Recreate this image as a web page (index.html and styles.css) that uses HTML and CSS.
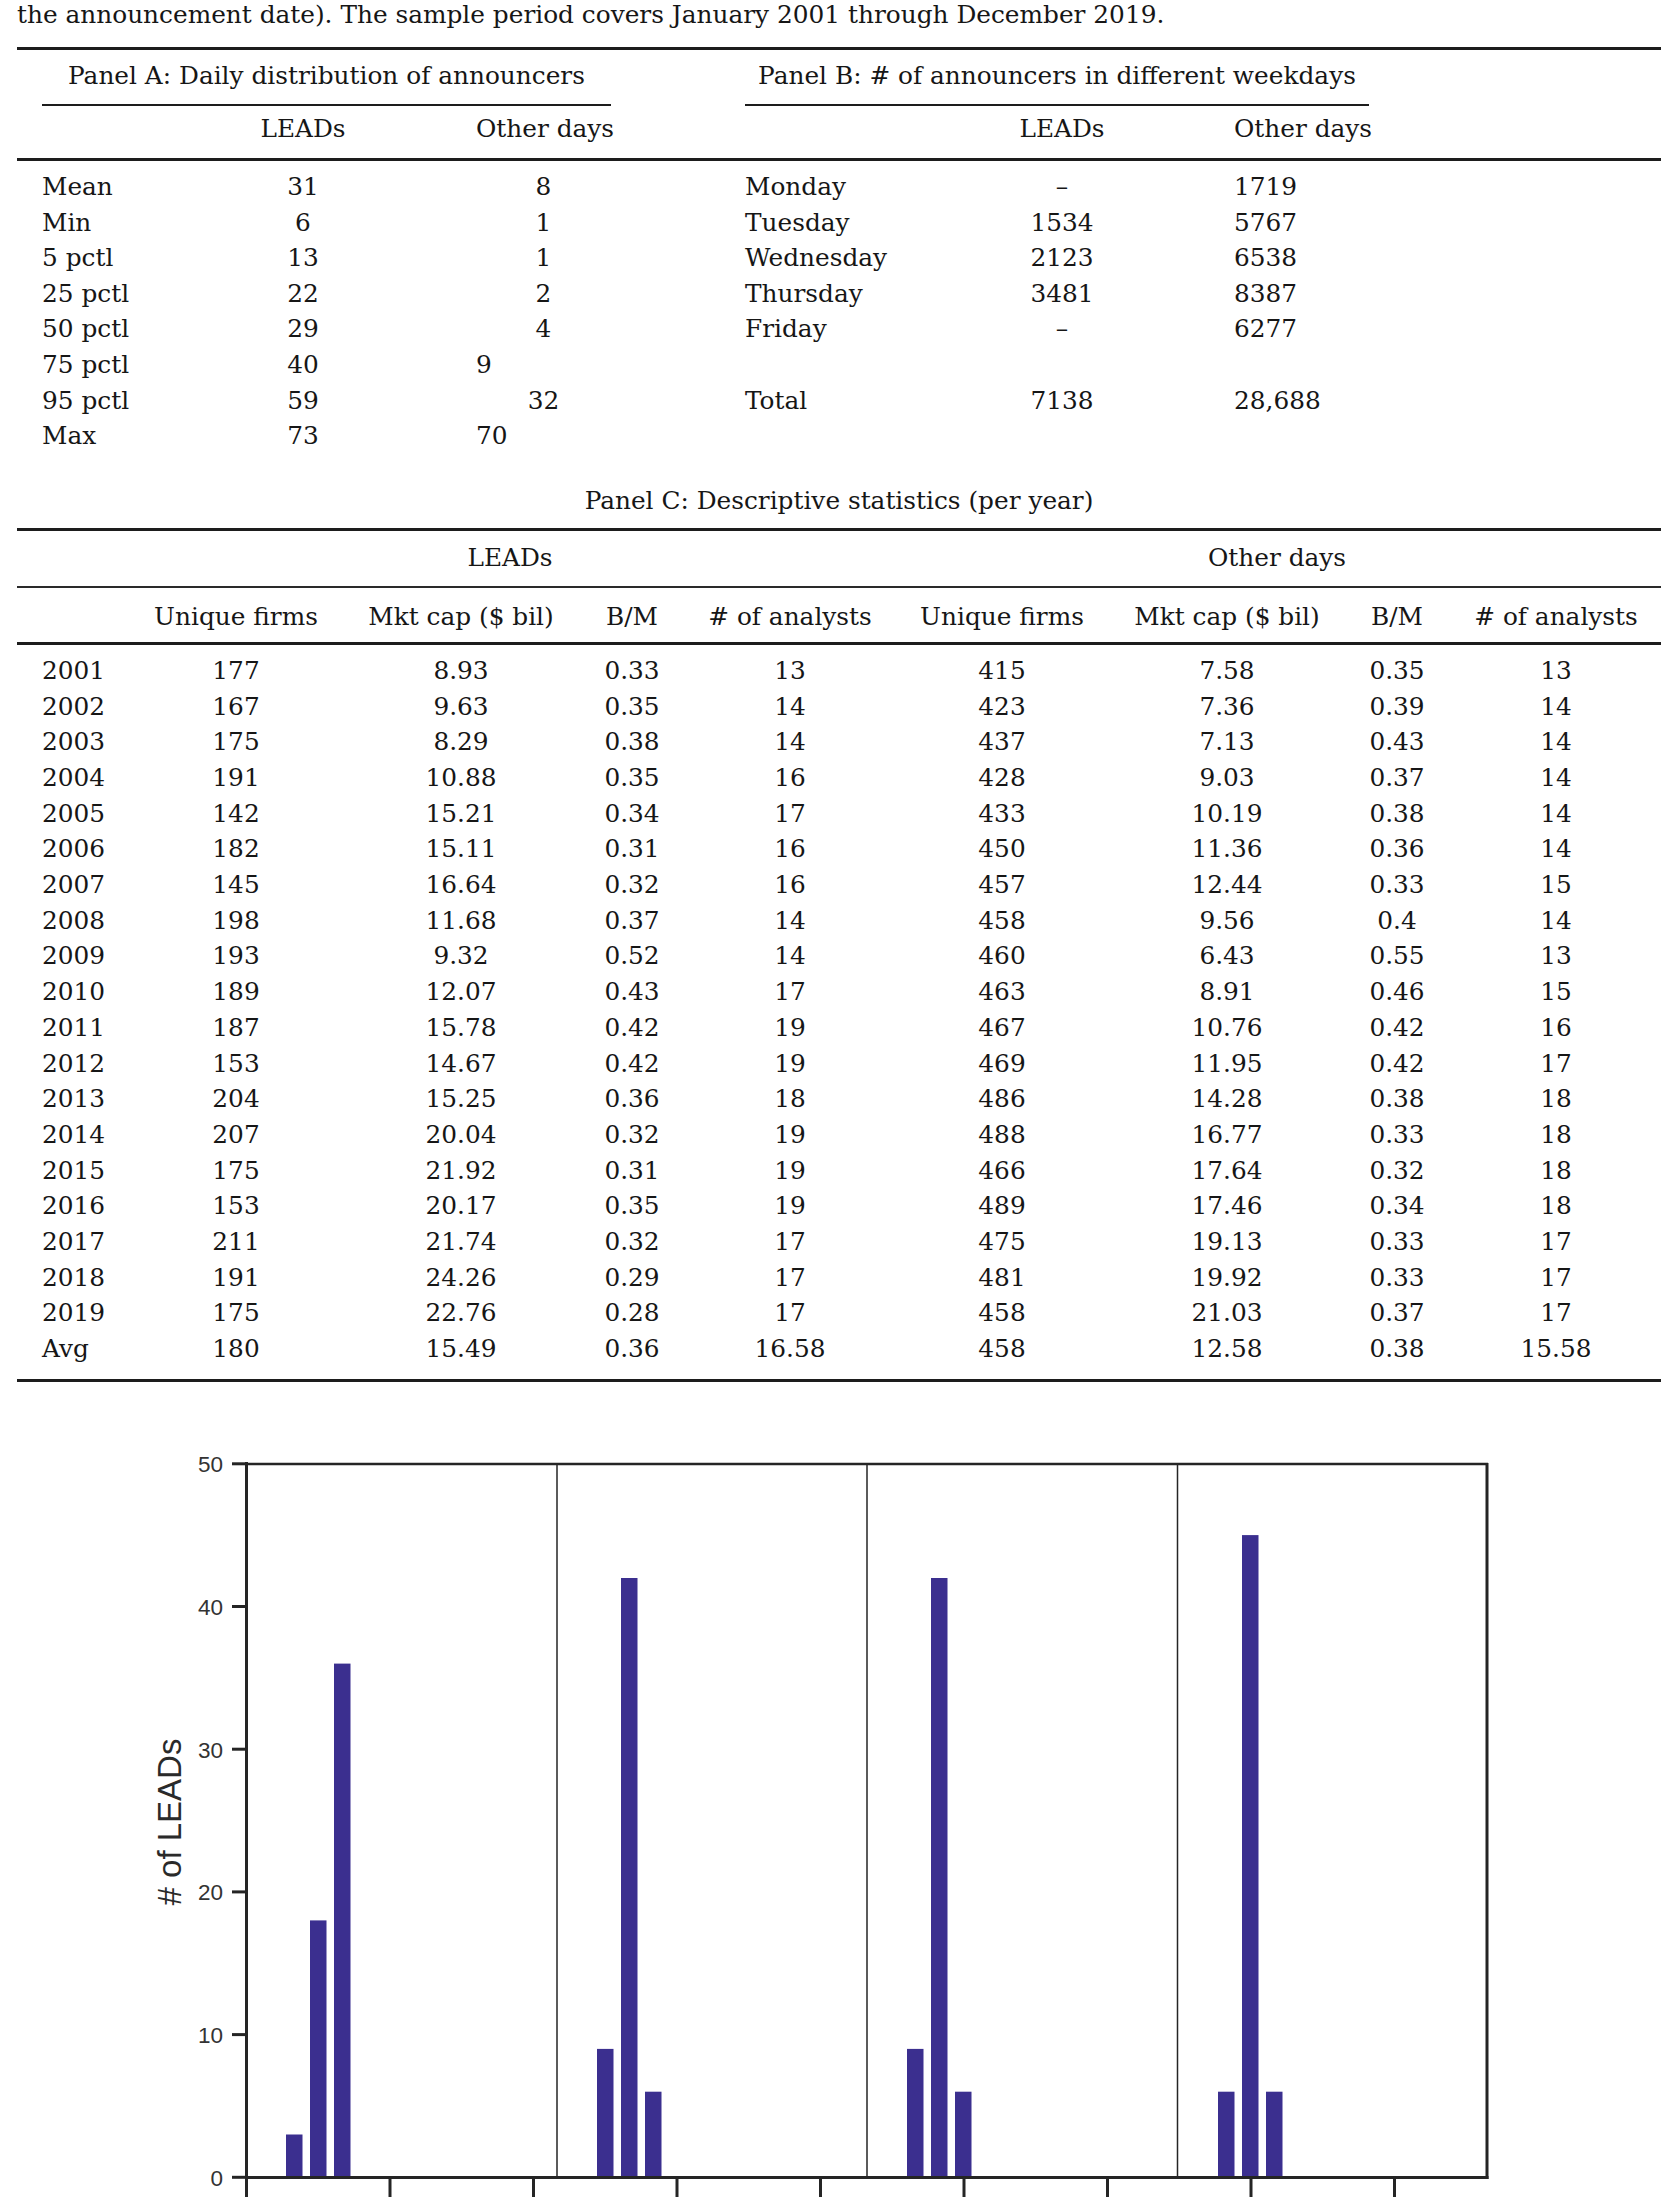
FILE: index.html
```html
<!DOCTYPE html>
<html lang="en">

<head>
    <meta charset="UTF-8">
    <meta name="viewport" content="width=device-width, initial-scale=1.0">
    <title>LEADs descriptive statistics</title>
    <link rel="stylesheet" href="styles.css">
</head>

<body>
    <p class="intro">the announcement date). The sample period covers January 2001 through December 2019.</p>

    <!-- --------  PANEL A / B HEAD ------------------- -->
    <div class="ab-head">
        <div class="panel panel-a">
            <div class="panel-title">Panel A: Daily distribution of announcers</div>
            <div class="col-head grid-a">
                <span></span><span class="c">LEADs</span><span></span><span class="l">Other days</span>
            </div>
        </div>
        <div class="panel panel-b">
            <div class="panel-title">Panel B: # of announcers in different weekdays</div>
            <div class="col-head grid-b">
                <span></span><span class="c">LEADs</span><span></span><span class="l">Other days</span>
            </div>
        </div>
    </div>

    <!-- --------  PANEL A / B BODY ------------------- -->
    <div class="ab-body">
        <div class="panel panel-a grid-a">
            <span>Mean</span><span class="c">31</span><span></span><span class="c">8</span>
            <span>Min</span><span class="c">6</span><span></span><span class="c">1</span>
            <span>5 pctl</span><span class="c">13</span><span></span><span class="c">1</span>
            <span>25 pctl</span><span class="c">22</span><span></span><span class="c">2</span>
            <span>50 pctl</span><span class="c">29</span><span></span><span class="c">4</span>
            <span>75 pctl</span><span class="c">40</span><span></span><span class="l">9</span>
            <span>95 pctl</span><span class="c">59</span><span></span><span class="c">32</span>
            <span>Max</span><span class="c">73</span><span></span><span class="l">70</span>
        </div>
        <div class="panel panel-b grid-b">
            <span>Monday</span><span class="c">–</span><span></span><span class="l">1719</span>
            <span>Tuesday</span><span class="c">1534</span><span></span><span class="l">5767</span>
            <span>Wednesday</span><span class="c">2123</span><span></span><span class="l">6538</span>
            <span>Thursday</span><span class="c">3481</span><span></span><span class="l">8387</span>
            <span>Friday</span><span class="c">–</span><span></span><span class="l">6277</span>
            <span></span><span></span><span></span><span></span>
            <span>Total</span><span class="c">7138</span><span></span><span class="l">28,688</span>
        </div>
    </div>

    <!-- --------  PANEL C ------------------- -->
    <div class="panel-c-title">Panel C: Descriptive statistics (per year)</div>
    <div class="c-table">
        <div class="c-group grid-c">
            <span></span><span class="span4">LEADs</span><span class="span4">Other days</span>
        </div>
        <div class="c-cols grid-c">
            <span></span>
            <span>Unique firms</span><span>Mkt cap ($ bil)</span><span>B/M</span><span># of analysts</span>
            <span>Unique firms</span><span>Mkt cap ($ bil)</span><span>B/M</span><span># of analysts</span>
        </div>
        <div class="c-body">
            <div class="c-row grid-c"><span>2001</span><span>177</span><span>8.93</span><span>0.33</span><span>13</span><span>415</span><span>7.58</span><span>0.35</span><span>13</span></div>
            <div class="c-row grid-c"><span>2002</span><span>167</span><span>9.63</span><span>0.35</span><span>14</span><span>423</span><span>7.36</span><span>0.39</span><span>14</span></div>
            <div class="c-row grid-c"><span>2003</span><span>175</span><span>8.29</span><span>0.38</span><span>14</span><span>437</span><span>7.13</span><span>0.43</span><span>14</span></div>
            <div class="c-row grid-c"><span>2004</span><span>191</span><span>10.88</span><span>0.35</span><span>16</span><span>428</span><span>9.03</span><span>0.37</span><span>14</span></div>
            <div class="c-row grid-c"><span>2005</span><span>142</span><span>15.21</span><span>0.34</span><span>17</span><span>433</span><span>10.19</span><span>0.38</span><span>14</span></div>
            <div class="c-row grid-c"><span>2006</span><span>182</span><span>15.11</span><span>0.31</span><span>16</span><span>450</span><span>11.36</span><span>0.36</span><span>14</span></div>
            <div class="c-row grid-c"><span>2007</span><span>145</span><span>16.64</span><span>0.32</span><span>16</span><span>457</span><span>12.44</span><span>0.33</span><span>15</span></div>
            <div class="c-row grid-c"><span>2008</span><span>198</span><span>11.68</span><span>0.37</span><span>14</span><span>458</span><span>9.56</span><span>0.4</span><span>14</span></div>
            <div class="c-row grid-c"><span>2009</span><span>193</span><span>9.32</span><span>0.52</span><span>14</span><span>460</span><span>6.43</span><span>0.55</span><span>13</span></div>
            <div class="c-row grid-c"><span>2010</span><span>189</span><span>12.07</span><span>0.43</span><span>17</span><span>463</span><span>8.91</span><span>0.46</span><span>15</span></div>
            <div class="c-row grid-c"><span>2011</span><span>187</span><span>15.78</span><span>0.42</span><span>19</span><span>467</span><span>10.76</span><span>0.42</span><span>16</span></div>
            <div class="c-row grid-c"><span>2012</span><span>153</span><span>14.67</span><span>0.42</span><span>19</span><span>469</span><span>11.95</span><span>0.42</span><span>17</span></div>
            <div class="c-row grid-c"><span>2013</span><span>204</span><span>15.25</span><span>0.36</span><span>18</span><span>486</span><span>14.28</span><span>0.38</span><span>18</span></div>
            <div class="c-row grid-c"><span>2014</span><span>207</span><span>20.04</span><span>0.32</span><span>19</span><span>488</span><span>16.77</span><span>0.33</span><span>18</span></div>
            <div class="c-row grid-c"><span>2015</span><span>175</span><span>21.92</span><span>0.31</span><span>19</span><span>466</span><span>17.64</span><span>0.32</span><span>18</span></div>
            <div class="c-row grid-c"><span>2016</span><span>153</span><span>20.17</span><span>0.35</span><span>19</span><span>489</span><span>17.46</span><span>0.34</span><span>18</span></div>
            <div class="c-row grid-c"><span>2017</span><span>211</span><span>21.74</span><span>0.32</span><span>17</span><span>475</span><span>19.13</span><span>0.33</span><span>17</span></div>
            <div class="c-row grid-c"><span>2018</span><span>191</span><span>24.26</span><span>0.29</span><span>17</span><span>481</span><span>19.92</span><span>0.33</span><span>17</span></div>
            <div class="c-row grid-c"><span>2019</span><span>175</span><span>22.76</span><span>0.28</span><span>17</span><span>458</span><span>21.03</span><span>0.37</span><span>17</span></div>
            <div class="c-row grid-c"><span>Avg</span><span>180</span><span>15.49</span><span>0.36</span><span>16.58</span><span>458</span><span>12.58</span><span>0.38</span><span>15.58</span></div>
        </div>
    </div>

    <!-- --------  CHART ------------------- -->
    <svg class="chart" viewBox="0 1400 1678 797" width="1678" height="797">
        <!-- bars, # of LEADs per day -->
        <rect class="bar" x="286" y="2134.5" width="16.5" height="42.8" />
        <rect class="bar" x="310" y="1920.4" width="16.5" height="256.9" />
        <rect class="bar" x="334" y="1663.6" width="16.5" height="513.7" />

        <rect class="bar" x="597" y="2048.9" width="16.5" height="128.4" />
        <rect class="bar" x="621" y="1578" width="16.5" height="599.3" />
        <rect class="bar" x="645" y="2091.7" width="16.5" height="85.6" />

        <rect class="bar" x="907" y="2048.9" width="16.5" height="128.4" />
        <rect class="bar" x="931" y="1578" width="16.5" height="599.3" />
        <rect class="bar" x="955" y="2091.7" width="16.5" height="85.6" />

        <rect class="bar" x="1218" y="2091.7" width="16.5" height="85.6" />
        <rect class="bar" x="1242" y="1535.1" width="16.5" height="642.2" />
        <rect class="bar" x="1266" y="2091.7" width="16.5" height="85.6" />

        <!-- frame -->
        <line class="axis thin" x1="557" y1="1464" x2="557" y2="2177" />
        <line class="axis thin" x1="867" y1="1464" x2="867" y2="2177" />
        <line class="axis thin" x1="1177.5" y1="1464" x2="1177.5" y2="2177" />
        <line class="axis mid" x1="246" y1="1464" x2="1488" y2="1464" />
        <line class="axis" x1="1487" y1="1463" x2="1487" y2="2179" />
        <line class="axis" x1="246.5" y1="1462" x2="246.5" y2="2179" />
        <line class="axis" x1="245" y1="2177.5" x2="1488.5" y2="2177.5" />

        <!-- y ticks -->
        <line class="axis" x1="232" y1="2177.3" x2="246" y2="2177.3" />
        <line class="axis" x1="232" y1="2034.6" x2="246" y2="2034.6" />
        <line class="axis" x1="232" y1="1891.9" x2="246" y2="1891.9" />
        <line class="axis" x1="232" y1="1749.2" x2="246" y2="1749.2" />
        <line class="axis" x1="232" y1="1606.5" x2="246" y2="1606.5" />
        <line class="axis" x1="232" y1="1463.8" x2="246" y2="1463.8" />

        <text class="tick-label" x="223" y="2185.5">0</text>
        <text class="tick-label" x="223" y="2042.5">10</text>
        <text class="tick-label" x="223" y="1900">20</text>
        <text class="tick-label" x="223" y="1757.5">30</text>
        <text class="tick-label" x="223" y="1614.5">40</text>
        <text class="tick-label" x="223" y="1472">50</text>

        <!-- x ticks -->
        <line class="axis" x1="246.5" y1="2177" x2="246.5" y2="2197" />
        <line class="axis" x1="390" y1="2177" x2="390" y2="2197" />
        <line class="axis" x1="533.5" y1="2177" x2="533.5" y2="2197" />
        <line class="axis" x1="677" y1="2177" x2="677" y2="2197" />
        <line class="axis" x1="820.5" y1="2177" x2="820.5" y2="2197" />
        <line class="axis" x1="964" y1="2177" x2="964" y2="2197" />
        <line class="axis" x1="1107.5" y1="2177" x2="1107.5" y2="2197" />
        <line class="axis" x1="1251" y1="2177" x2="1251" y2="2197" />
        <line class="axis" x1="1394.5" y1="2177" x2="1394.5" y2="2197" />

        <text class="axis-title" x="181" y="1822" transform="rotate(-90 181 1822)"># of LEADs</text>
    </svg>
</body>

</html>
```

FILE: styles.css
```css
* {
    margin: 0;
    padding: 0;
    box-sizing: border-box;
}

html,
body {
    overflow: hidden;
}

body {
    width: 1678px;
    height: 2197px;
    padding: 0 17px;
    background: #fff;
    color: #161616;
    font-family: "DejaVu Serif", "Liberation Serif", serif;
    font-size: 24.8px;
}

.intro {
    margin-top: -3px;
    line-height: 35.6px;
    white-space: nowrap;
}

/* --------  PANEL A / B ------------------- */
.ab-head {
    display: flex;
    gap: 134px;
    padding-left: 25px;
    margin-top: 14.4px;
    border-top: 3px solid #1d1d1d;
    border-bottom: 3px solid #1d1d1d;
}

.ab-body {
    display: flex;
    gap: 134px;
    padding-left: 25px;
    padding-top: 8px;
    align-items: start;
}

.panel-a {
    width: 569px;
}

.panel-b {
    width: 624px;
}

.panel-title {
    padding-top: 8px;
    padding-bottom: 10.4px;
    line-height: 35.6px;
    text-align: center;
    border-bottom: 2px solid #1d1d1d;
    white-space: nowrap;
}

.col-head {
    padding-top: 5.5px;
    padding-bottom: 10.9px;
}

.grid-a,
.grid-b {
    display: grid;
    grid-auto-rows: 35.6px;
    line-height: 35.6px;
    white-space: nowrap;
}

.grid-a {
    grid-template-columns: 199px 124px 111px 135px;
}

.grid-b {
    grid-template-columns: 250px 134px 105px 135px;
}

.c {
    text-align: center;
}

.l {
    text-align: left;
}

/* --------  PANEL C ------------------- */
.panel-c-title {
    margin-top: 29px;
    padding-bottom: 10px;
    line-height: 35.6px;
    text-align: center;
}

.c-table {
    border-top: 3px solid #1d1d1d;
    border-bottom: 3px solid #1d1d1d;
}

.grid-c {
    display: grid;
    grid-template-columns: 110px 218px 232px 110px 206px 218px 232px 108px 210px;
    line-height: 35.68px;
    white-space: nowrap;
    text-align: center;
}

.grid-c span:first-child {
    text-align: left;
    padding-left: 25px;
}

.c-group {
    padding-top: 8.6px;
    padding-bottom: 10.4px;
    border-bottom: 2px solid #2a2a2a;
}

.span4 {
    grid-column: span 4;
}

.c-cols {
    padding-top: 11px;
    padding-bottom: 7px;
    border-bottom: 3px solid #1d1d1d;
}

.c-body {
    padding-top: 8.3px;
    padding-bottom: 12px;
}

/* --------  CHART ------------------- */
.chart {
    display: block;
    margin-top: 18.5px;
    margin-left: -17px;
}

.bar {
    fill: #3b2f8f;
}

.axis {
    stroke: #252525;
    stroke-width: 3;
}

.axis.mid {
    stroke-width: 2.5;
}

.axis.thin {
    stroke-width: 1.5;
}

.tick-label {
    font-family: "Liberation Sans", Arial, sans-serif;
    font-size: 22.5px;
    fill: #333;
    text-anchor: end;
}

.axis-title {
    font-family: "Liberation Sans", Arial, sans-serif;
    font-size: 33px;
    fill: #2a2a2a;
    text-anchor: middle;
}
```
